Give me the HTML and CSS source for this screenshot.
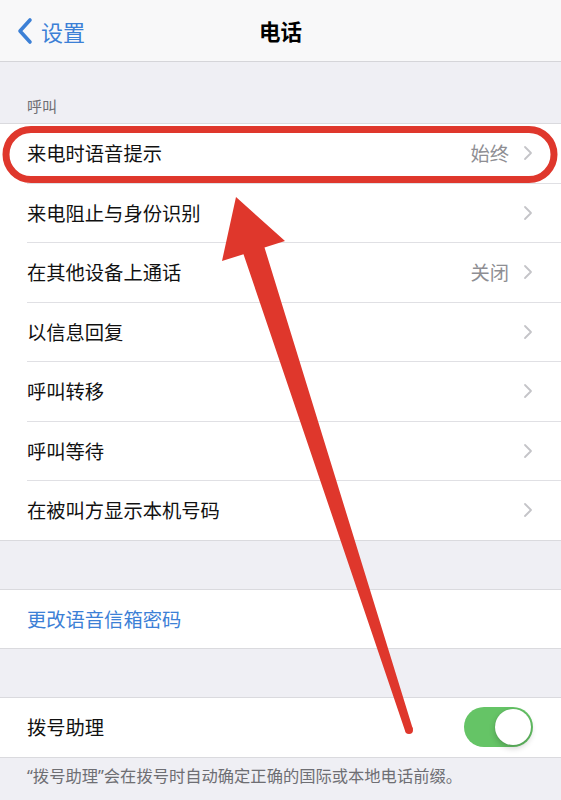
FILE: index.html
```html
<!DOCTYPE html>
<html lang="zh-CN">

<head>
    <meta charset="UTF-8">
    <meta name="viewport" content="width=device-width, initial-scale=1.0">
    <title>电话</title>
    <link rel="stylesheet" href="styles.css">
</head>

<body>
    <div class="screen">
        <header class="nav">
            <a class="back" href="#">
                <svg class="back-icon" viewBox="0 0 16 28" width="16" height="28">
                    <path d="M13 3 L3 14 L13 25" fill="none" stroke="currentColor" stroke-width="3.6" stroke-linecap="round" stroke-linejoin="round" />
                </svg>
                <span>设置</span>
            </a>
            <h1>电话</h1>
            <span></span>
        </header>

        <div class="section-title">呼叫</div>

        <ul class="group">
            <li class="row">
                <div class="row-body">
                    <span class="label">来电时语音提示</span>
                    <span class="detail">始终</span>
                    <svg class="chevron" viewBox="0 0 10 16" width="10" height="16"><path d="M2 2 L8 8 L2 14" /></svg>
                </div>
            </li>
            <li class="row">
                <div class="row-body">
                    <span class="label">来电阻止与身份识别</span>
                    <svg class="chevron" viewBox="0 0 10 16" width="10" height="16"><path d="M2 2 L8 8 L2 14" /></svg>
                </div>
            </li>
            <li class="row">
                <div class="row-body">
                    <span class="label">在其他设备上通话</span>
                    <span class="detail">关闭</span>
                    <svg class="chevron" viewBox="0 0 10 16" width="10" height="16"><path d="M2 2 L8 8 L2 14" /></svg>
                </div>
            </li>
            <li class="row">
                <div class="row-body">
                    <span class="label">以信息回复</span>
                    <svg class="chevron" viewBox="0 0 10 16" width="10" height="16"><path d="M2 2 L8 8 L2 14" /></svg>
                </div>
            </li>
            <li class="row">
                <div class="row-body">
                    <span class="label">呼叫转移</span>
                    <svg class="chevron" viewBox="0 0 10 16" width="10" height="16"><path d="M2 2 L8 8 L2 14" /></svg>
                </div>
            </li>
            <li class="row">
                <div class="row-body">
                    <span class="label">呼叫等待</span>
                    <svg class="chevron" viewBox="0 0 10 16" width="10" height="16"><path d="M2 2 L8 8 L2 14" /></svg>
                </div>
            </li>
            <li class="row">
                <div class="row-body">
                    <span class="label">在被叫方显示本机号码</span>
                    <svg class="chevron" viewBox="0 0 10 16" width="10" height="16"><path d="M2 2 L8 8 L2 14" /></svg>
                </div>
            </li>
        </ul>

        <ul class="group">
            <li class="row">
                <div class="row-body">
                    <span class="label link">更改语音信箱密码</span>
                </div>
            </li>
        </ul>

        <ul class="group">
            <li class="row">
                <div class="row-body">
                    <span class="label">拨号助理</span>
                    <span class="switch on"><span class="knob"></span></span>
                </div>
            </li>
        </ul>

        <p class="footnote">“拨号助理”会在拨号时自动确定正确的国际或本地电话前缀。</p>

        <!-- red markup drawn over the screenshot -->
        <svg class="annotation" viewBox="0 0 561 800" width="561" height="800">
            <rect x="6" y="129.5" width="548" height="50" rx="25" ry="25" fill="none" stroke="#df372c" stroke-width="7" />
            <polygon points="236,197 285,241 264.5,247.5 412.8,728.8 405.2,731.2 243.5,254.2 222,261" fill="#df372c" />
            <circle cx="409" cy="730" r="4" fill="#df372c" />
        </svg>
    </div>
</body>

</html>
```

FILE: styles.css
```css
* {
    box-sizing: border-box;
}

body {
    margin: 0;
    padding: 0;
    background-color: #efeff4;
    font-family: "Noto Sans", "Noto Sans CJK SC", sans-serif;
    color: #111;
}

.screen {
    position: relative;
    width: 561px;
    height: 800px;
    overflow: hidden;
}

/* 顶部导航 */
.nav {
    display: grid;
    grid-template-columns: 1fr auto 1fr;
    align-items: center;
    height: 62px;
    padding: 0 17px 0;
    background-color: #f8f8f9;
    border-bottom: 1px solid #d5d5d9;
}

.nav h1 {
    margin: 0;
    font-size: 21.5px;
    font-weight: 700;
    color: #000;
}

.back {
    display: flex;
    align-items: center;
    gap: 8px;
    color: #3c80d6;
    text-decoration: none;
    font-size: 22px;
}

.back-icon {
    display: block;
}

.section-title {
    display: flex;
    align-items: flex-end;
    height: 61px;
    padding: 0 0 7px 27px;
    font-size: 15px;
    color: #6e6e73;
}

/* 列表 */
.group {
    list-style: none;
    margin: 0 0 48px;
    padding: 0;
    background-color: #fff;
    border-top: 1px solid #dadade;
    border-bottom: 1px solid #dadade;
}

.group:last-of-type {
    margin-bottom: 0;
}

.row {
    padding-left: 27px;
}

.row-body {
    display: flex;
    align-items: center;
    height: 59.5px;
    padding-right: 28px;
    border-bottom: 1px solid #e0e0e4;
}

.row:last-child .row-body {
    border-bottom: none;
    height: 58.5px;
}

.label {
    flex: 1;
    font-size: 19.3px;
    color: #111;
}

.label.link {
    color: #3c80d6;
}

.detail {
    font-size: 19.3px;
    color: #8e8e93;
    margin-right: 14px;
}

.chevron {
    display: block;
    width: 10px;
    height: 16px;
}

.chevron path {
    fill: none;
    stroke: #c4c4c8;
    stroke-width: 1.8;
    stroke-linecap: round;
    stroke-linejoin: round;
}

.switch {
    position: relative;
    width: 69px;
    height: 40px;
    border-radius: 20px;
    background-color: #e5e5ea;
}

.switch.on {
    background-color: #65c466;
}

.switch .knob {
    position: absolute;
    top: 2px;
    right: 2px;
    width: 36px;
    height: 36px;
    border-radius: 50%;
    background-color: #fff;
    box-shadow: 0 3px 6px rgba(0, 0, 0, 0.2), 0 0 1px rgba(0, 0, 0, 0.2);
}

.footnote {
    margin: 0;
    padding: 5px 20px 0 27px;
    font-size: 16.3px;
    color: #6e6e73;
}

.annotation {
    position: absolute;
    top: 0;
    left: 0;
    pointer-events: none;
}
```
